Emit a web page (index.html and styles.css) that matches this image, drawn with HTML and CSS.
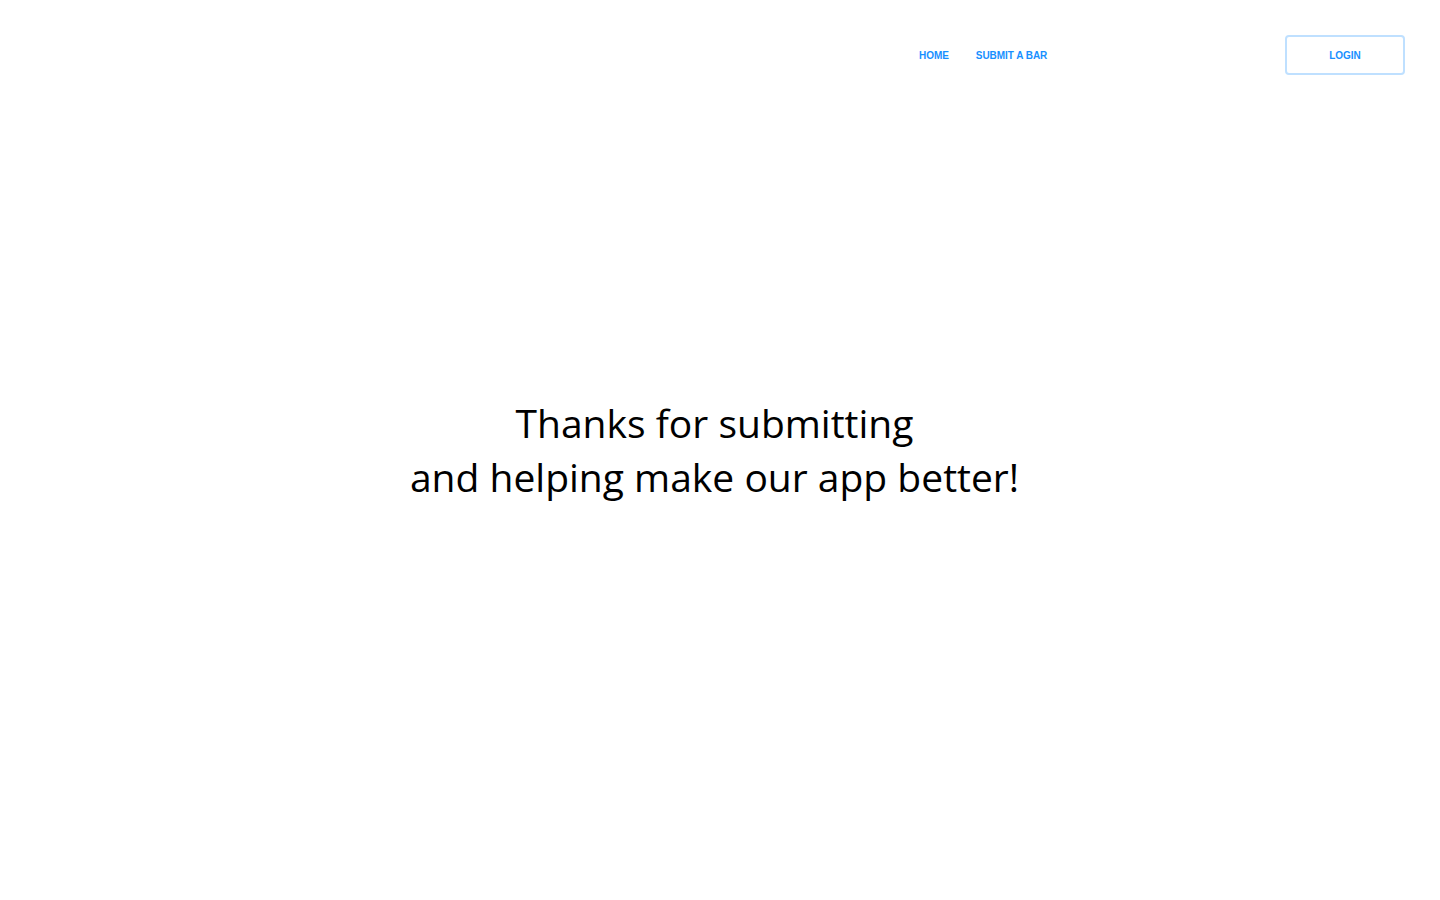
FILE: index.html
```html
<!DOCTYPE html>
<html lang="en">
<head>
<meta charset="utf-8">
<title>Thanks</title>
<link rel="stylesheet" href="styles.css">
</head>
<body>
<header class="topbar">
  <nav class="nav">
    <a class="nav-link" href="#">HOME</a>
    <a class="nav-link" href="#">SUBMIT A BAR</a>
  </nav>
  <button class="login" type="button">LOGIN</button>
</header>
<main class="content">
  <h1 class="thanks">Thanks for submitting<br>and helping make our app better!</h1>
</main>
</body>
</html>
```
FILE: styles.css
```css
* { box-sizing: border-box; }
html, body { margin: 0; padding: 0; background: #fff; }
body { font-family: "Liberation Sans", Arial, sans-serif; height: 900px; display: flex; flex-direction: column; }
.topbar { display: flex; align-items: center; height: 110px; padding: 0 35px 0 919px; }
.nav { display: flex; gap: 27px; flex: 1; }
.nav-link { color: #1890ff; font-size: 10px; font-weight: 700; text-decoration: none; letter-spacing: -0.05px; }
.login { width: 120px; height: 40px; background: #fff; border: 2px solid #bfe0ff; border-radius: 4px; color: #1890ff; font-family: "Liberation Sans", Arial, sans-serif; font-size: 10px; font-weight: 700; padding: 0; }
.content { flex: 1; display: flex; justify-content: center; padding: 286px 11px 0 0; }
.thanks { margin: 0; font-family: "Open Sans", "Noto Sans", sans-serif; font-weight: 400; font-size: 39px; line-height: 54px; text-align: center; color: #000; }
```
